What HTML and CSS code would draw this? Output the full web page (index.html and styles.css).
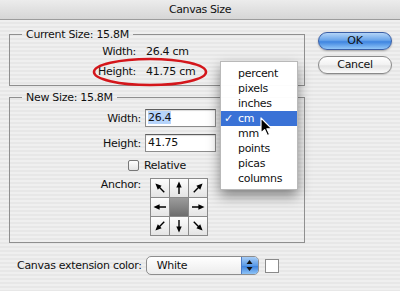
FILE: index.html
```html
<!DOCTYPE html>
<html>
<head>
    <meta charset="UTF-8">
    <title>Canvas Size</title>
    <link rel="stylesheet" href="styles.css">
</head>
<body>
    <svg class="defs" width="0" height="0">
        <symbol id="arrow" viewBox="0 0 18 18">
            <line x1="9" y1="15" x2="9" y2="7" stroke="#000" stroke-width="1.4"/>
            <polygon points="6.3,8.6 9,2.5 11.7,8.6" fill="#000"/>
        </symbol>
    </svg>

    <div class="titlebar">Canvas Size</div>

    <div class="content">
        <div class="main">
            <div class="groups">
                <fieldset class="group current">
                    <legend>Current Size: 15.8M</legend>
                    <div class="info-row">
                        <span class="label">Width:</span>
                        <span>26.4 cm</span>
                    </div>
                    <div class="info-row marked">
                        <span class="label">Height:</span>
                        <span>41.75 cm</span>
                        <svg class="ring" viewBox="0 0 116 30">
                            <ellipse cx="58" cy="15" rx="56" ry="13" fill="none" stroke="#d4161b" stroke-width="2.6"/>
                        </svg>
                    </div>
                </fieldset>

                <fieldset class="group new">
                    <legend>New Size: 15.8M</legend>
                    <div class="field-row">
                        <span class="label">Width:</span>
                        <div class="input"><span class="sel">26.4</span></div>
                    </div>
                    <div class="field-row">
                        <span class="label">Height:</span>
                        <div class="input">41.75</div>
                    </div>
                    <div class="check-row">
                        <span class="checkbox"></span>
                        <span>Relative</span>
                    </div>
                    <div class="anchor-row">
                        <span class="label">Anchor:</span>
                        <div class="anchor">
                            <span class="cell"><svg class="nw"><use href="#arrow"/></svg></span>
                            <span class="cell"><svg class="n"><use href="#arrow"/></svg></span>
                            <span class="cell"><svg class="ne"><use href="#arrow"/></svg></span>
                            <span class="cell"><svg class="w"><use href="#arrow"/></svg></span>
                            <span class="cell center"></span>
                            <span class="cell"><svg class="e"><use href="#arrow"/></svg></span>
                            <span class="cell"><svg class="sw"><use href="#arrow"/></svg></span>
                            <span class="cell"><svg class="s"><use href="#arrow"/></svg></span>
                            <span class="cell"><svg class="se"><use href="#arrow"/></svg></span>
                        </div>
                    </div>
                </fieldset>
            </div>

            <div class="buttons">
                <div class="btn btn-default">OK</div>
                <div class="btn btn-cancel">Cancel</div>
            </div>
        </div>

        <div class="footer">
            <span>Canvas extension color:</span>
            <div class="popup">
                <span class="popup-text">White</span>
                <span class="stepper">
                    <svg width="7" height="11" viewBox="0 0 7 11">
                        <polygon points="0.5,4 3.5,0 6.5,4" fill="#111"/>
                        <polygon points="0.5,7 3.5,11 6.5,7" fill="#111"/>
                    </svg>
                </span>
            </div>
            <span class="swatch"></span>
        </div>
    </div>

    <!-- open units menu -->
    <ul class="menu">
        <li><span class="check"></span>percent</li>
        <li><span class="check"></span>pixels</li>
        <li><span class="check"></span>inches</li>
        <li class="active"><span class="check">✓</span>cm</li>
        <li><span class="check"></span>mm</li>
        <li><span class="check"></span>points</li>
        <li><span class="check"></span>picas</li>
        <li><span class="check"></span>columns</li>
    </ul>

    <svg class="cursor" width="14" height="20" viewBox="0 0 14 20">
        <path d="M1 1 L1 16 L4.6 12.6 L7.4 18.6 L9.6 17.6 L6.9 11.8 L11.8 11.8 Z" fill="#000" stroke="#fff" stroke-width="1.2" stroke-linejoin="round"/>
    </svg>
</body>
</html>
```

FILE: styles.css
```css
body {
    margin: 0;
    font-family: 'DejaVu Sans', sans-serif;
    font-size: 11px;
    letter-spacing: -0.3px;
    color: #111;
    background: repeating-linear-gradient(#efefef 0 2px, #e7e7e7 2px 4px);
    height: 291px;
    overflow: hidden;
    position: relative;
}
.defs {
    position: absolute;
}
.titlebar {
    height: 19px;
    line-height: 19px;
    text-align: center;
    letter-spacing: -0.4px;
    background: linear-gradient(#ececec, #d6d6d6);
    border-bottom: 1px solid #9c9c9c;
}
.content {
    padding: 8px 0 0 9px;
}
.main {
    display: flex;
    align-items: flex-start;
}
.groups {
    width: 296px;
}
.group {
    margin: 0;
    padding: 0;
    border: 1px solid #8f8f8f;
    min-width: 0;
}
.group legend {
    margin-left: 12px;
    padding: 0 4px;
    line-height: 13px;
}
.current {
    padding: 1px 0 3px;
}
.info-row {
    display: grid;
    grid-template-columns: 126px auto;
    column-gap: 10px;
    line-height: 20px;
    position: relative;
}
.label {
    text-align: right;
}
.ring {
    position: absolute;
    left: 82px;
    top: -5px;
    width: 116px;
    height: 30px;
}
.new {
    margin-top: 5px;
    padding: 5px 0 6px;
}
.field-row {
    display: grid;
    grid-template-columns: 131px 71px;
    column-gap: 4px;
    align-items: center;
    margin-bottom: 7px;
}
.input {
    height: 18px;
    box-sizing: border-box;
    border: 1px solid #8c8c8c;
    border-top-color: #5f5f5f;
    background: #fff;
    box-shadow: inset 0 1px 1px rgba(0,0,0,0.15);
    padding-left: 2px;
    line-height: 16px;
}
.sel {
    background: #b6d4fb;
}
.check-row {
    display: flex;
    align-items: center;
    gap: 5px;
    height: 14px;
    margin-top: -1px;
    padding-left: 118px;
}
.checkbox {
    width: 11px;
    height: 11px;
    box-sizing: border-box;
    border: 1px solid #777;
    border-radius: 2px;
    background: linear-gradient(#fff, #e4e4e4);
}
.anchor-row {
    display: grid;
    grid-template-columns: 131px auto;
    column-gap: 9px;
    margin-top: 6px;
    line-height: 14px;
}
.anchor {
    display: grid;
    grid-template-columns: repeat(3, 18px);
    grid-auto-rows: 18px;
    gap: 1px;
    padding: 1px;
    width: max-content;
    background: #8a8a8a;
}
.cell {
    background: linear-gradient(#fdfdfd, #e4e4e4);
}
.cell svg {
    display: block;
    width: 18px;
    height: 18px;
}
.cell.center {
    background: linear-gradient(#9c9c9c, #6e6e6e);
}
.nw { transform: rotate(-45deg); }
.ne { transform: rotate(45deg); }
.w { transform: rotate(-90deg); }
.e { transform: rotate(90deg); }
.sw { transform: rotate(-135deg); }
.s { transform: rotate(180deg); }
.se { transform: rotate(135deg); }
.buttons {
    margin: 4px 0 0 13px;
    display: flex;
    flex-direction: column;
    gap: 6px;
}
.btn {
    width: 74px;
    height: 18px;
    box-sizing: border-box;
    border-radius: 9px;
    text-align: center;
    line-height: 16px;
}
.btn-default {
    border: 1px solid #3a5fa6;
    background: linear-gradient(#b3d4f7, #6aa5ea 45%, #3f85e0 55%, #92c7f8);
    box-shadow: 0 1px 2px rgba(0,0,0,0.3);
}
.btn-cancel {
    border: 1px solid #8a8a8a;
    background: linear-gradient(#ffffff, #f1f1f1 50%, #e3e3e3 55%, #fbfbfb);
    box-shadow: 0 1px 1px rgba(0,0,0,0.15);
}
.footer {
    display: flex;
    align-items: center;
    height: 19px;
    margin-top: 13px;
    padding-left: 8px;
}
.popup {
    display: flex;
    width: 113px;
    height: 19px;
    margin-left: 4px;
    box-sizing: border-box;
    border: 1px solid #8d8d8d;
    border-radius: 5px;
    overflow: hidden;
    background: linear-gradient(#ffffff, #ececec);
}
.popup-text {
    flex: 1;
    padding-left: 10px;
    line-height: 17px;
}
.stepper {
    width: 16px;
    display: flex;
    align-items: center;
    justify-content: center;
    border-left: 1px solid #4c7bc7;
    background: linear-gradient(#a8cdf6, #5b9be6 50%, #3f84de 55%, #8ec3f6);
}
.swatch {
    width: 12px;
    height: 12px;
    margin-left: 6px;
    border: 1px solid #8a8a8a;
    background: #fff;
}
.menu {
    position: absolute;
    left: 220px;
    top: 61px;
    width: 78px;
    box-sizing: border-box;
    margin: 0;
    padding: 4px 0 3px;
    list-style: none;
    background: rgba(255,255,255,0.97);
    border: 1px solid #b9b9b9;
    box-shadow: 0 6px 12px rgba(0,0,0,0.45);
}
.menu li {
    display: flex;
    height: 15px;
    line-height: 15px;
}
.check {
    width: 17px;
    padding-left: 3px;
    box-sizing: border-box;
}
.menu li.active {
    background: #3a72d6;
    color: #fff;
}
.cursor {
    position: absolute;
    left: 260px;
    top: 117px;
}
```
